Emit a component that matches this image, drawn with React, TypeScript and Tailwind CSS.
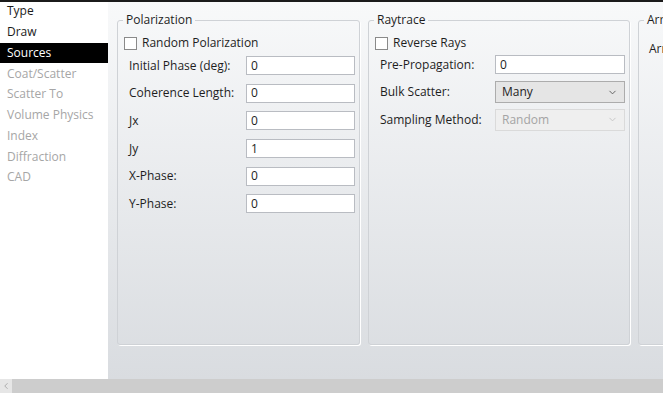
import { ChevronDown, ChevronLeft } from 'lucide-react'

const font = { fontFamily: '"Open Sans", "Noto Sans", Arial, sans-serif' }

const navItems = [
  { label: 'Type', state: 'normal' },
  { label: 'Draw', state: 'normal' },
  { label: 'Sources', state: 'active' },
  { label: 'Coat/Scatter', state: 'disabled' },
  { label: 'Scatter To', state: 'disabled' },
  { label: 'Volume Physics', state: 'disabled' },
  { label: 'Index', state: 'disabled' },
  { label: 'Diffraction', state: 'disabled' },
  { label: 'CAD', state: 'disabled' },
]

function Sidebar() {
  return (
    <div className="w-[108px] shrink-0 bg-white">
      <div className="mt-[-1px]">
        {navItems.map((item) => (
          <div
            key={item.label}
            className={
              item.state === 'active'
                ? 'h-[20.75px] flex items-center pl-[7px] bg-black text-white'
                : item.state === 'disabled'
                ? 'h-[20.75px] flex items-center pl-[7px] text-[#a6a6a6]'
                : 'h-[20.75px] flex items-center pl-[7px] text-[#1a1a1a]'
            }
          >
            {item.label}
          </div>
        ))}
      </div>
    </div>
  )
}

function GroupBox({ title, width, children }: { title: string; width: string; children?: React.ReactNode }) {
  return (
    <fieldset
      className={`${width} shrink-0 h-[333px] border border-[#cfd2d6] rounded-[3px] shadow-[1px_1px_0_#ffffff] px-[5px]`}
    >
      <legend className="px-[3px] leading-[16px] text-[#1e1e1e]">{title}</legend>
      {children}
    </fieldset>
  )
}

function Checkbox({ label }: { label: string }) {
  return (
    <div className="h-[16px] mt-[7px] pl-[1px] flex items-center gap-[5px] text-[#1e1e1e]">
      <span className="w-[13px] h-[13px] border border-[#8a8a8a] bg-white shrink-0" />
      <span>{label}</span>
    </div>
  )
}

function TextRow({ label, value, labelWidth }: { label: string; value: string; labelWidth: string }) {
  return (
    <div className="h-[27.6px] flex items-center">
      <span className={`${labelWidth} shrink-0 pl-[6px] text-[#1e1e1e]`}>{label}</span>
      <div className="flex-1 mr-[-1px] h-[19px] border border-[#b9bcc2] bg-white flex items-center pl-[4px] text-[#1e1e1e]">
        {value}
      </div>
    </div>
  )
}

function ComboRow({
  label,
  value,
  labelWidth,
  disabled,
}: {
  label: string
  value: string
  labelWidth: string
  disabled?: boolean
}) {
  return (
    <div className="h-[27.6px] flex items-center">
      <span className={`${labelWidth} shrink-0 pl-[6px] text-[#1e1e1e]`}>{label}</span>
      <div
        className={
          disabled
            ? 'flex-1 mr-[-1px] h-[22px] border border-[#dadada] bg-[#efefef] flex items-center justify-between pl-[6px] pr-[6px] text-[#a4a4a4]'
            : 'flex-1 mr-[-1px] h-[22px] border border-[#acacac] bg-[#e5e5e5] flex items-center justify-between pl-[6px] pr-[6px] text-[#1e1e1e]'
        }
      >
        <span>{value}</span>
        <ChevronDown size={11} strokeWidth={2} className={disabled ? 'text-[#c4c4c4]' : 'text-[#5a5a5a]'} />
      </div>
    </div>
  )
}

export default function App() {
  return (
    <div className="w-[663px] h-[393px] overflow-hidden flex flex-col text-[12px] bg-white" style={font}>
      <div className="h-[2px] bg-[#1b1b1b] shrink-0" />
      <div className="flex-1 flex min-h-0">
        <Sidebar />
        <div className="flex-1 overflow-hidden bg-linear-to-b from-[#f8f9fa] to-[#d9dce0] flex gap-[8px] pl-[9px] pt-[10px]">
          <GroupBox title="Polarization" width="w-[243px]">
            <Checkbox label="Random Polarization" />
            <div className="mt-[1px]">
              <TextRow labelWidth="w-[123px]" label="Initial Phase (deg):" value="0" />
              <TextRow labelWidth="w-[123px]" label="Coherence Length:" value="0" />
              <TextRow labelWidth="w-[123px]" label="Jx" value="0" />
              <TextRow labelWidth="w-[123px]" label="Jy" value="1" />
              <TextRow labelWidth="w-[123px]" label="X-Phase:" value="0" />
              <TextRow labelWidth="w-[123px]" label="Y-Phase:" value="0" />
            </div>
          </GroupBox>
          <GroupBox title="Raytrace" width="w-[262px]">
            <Checkbox label="Reverse Rays" />
            <div className="mt-[0px]">
              <TextRow labelWidth="w-[121px]" label="Pre-Propagation:" value="0" />
              <ComboRow labelWidth="w-[121px]" label="Bulk Scatter:" value="Many" />
              <ComboRow labelWidth="w-[121px]" label="Sampling Method:" value="Random" disabled />
            </div>
          </GroupBox>
          <GroupBox title="Arrays" width="w-[120px]">
            <div className="mt-[12px] pl-[5px] text-[#1e1e1e]">Array Type:</div>
          </GroupBox>
        </div>
      </div>
      <div className="h-[14px] shrink-0 flex bg-[#cdcdcd]">
        <div className="w-[12px] bg-[#e6e6e6] flex items-center justify-center text-[#8a8a8a]">
          <ChevronLeft size={10} strokeWidth={1.5} />
        </div>
      </div>
    </div>
  )
}
